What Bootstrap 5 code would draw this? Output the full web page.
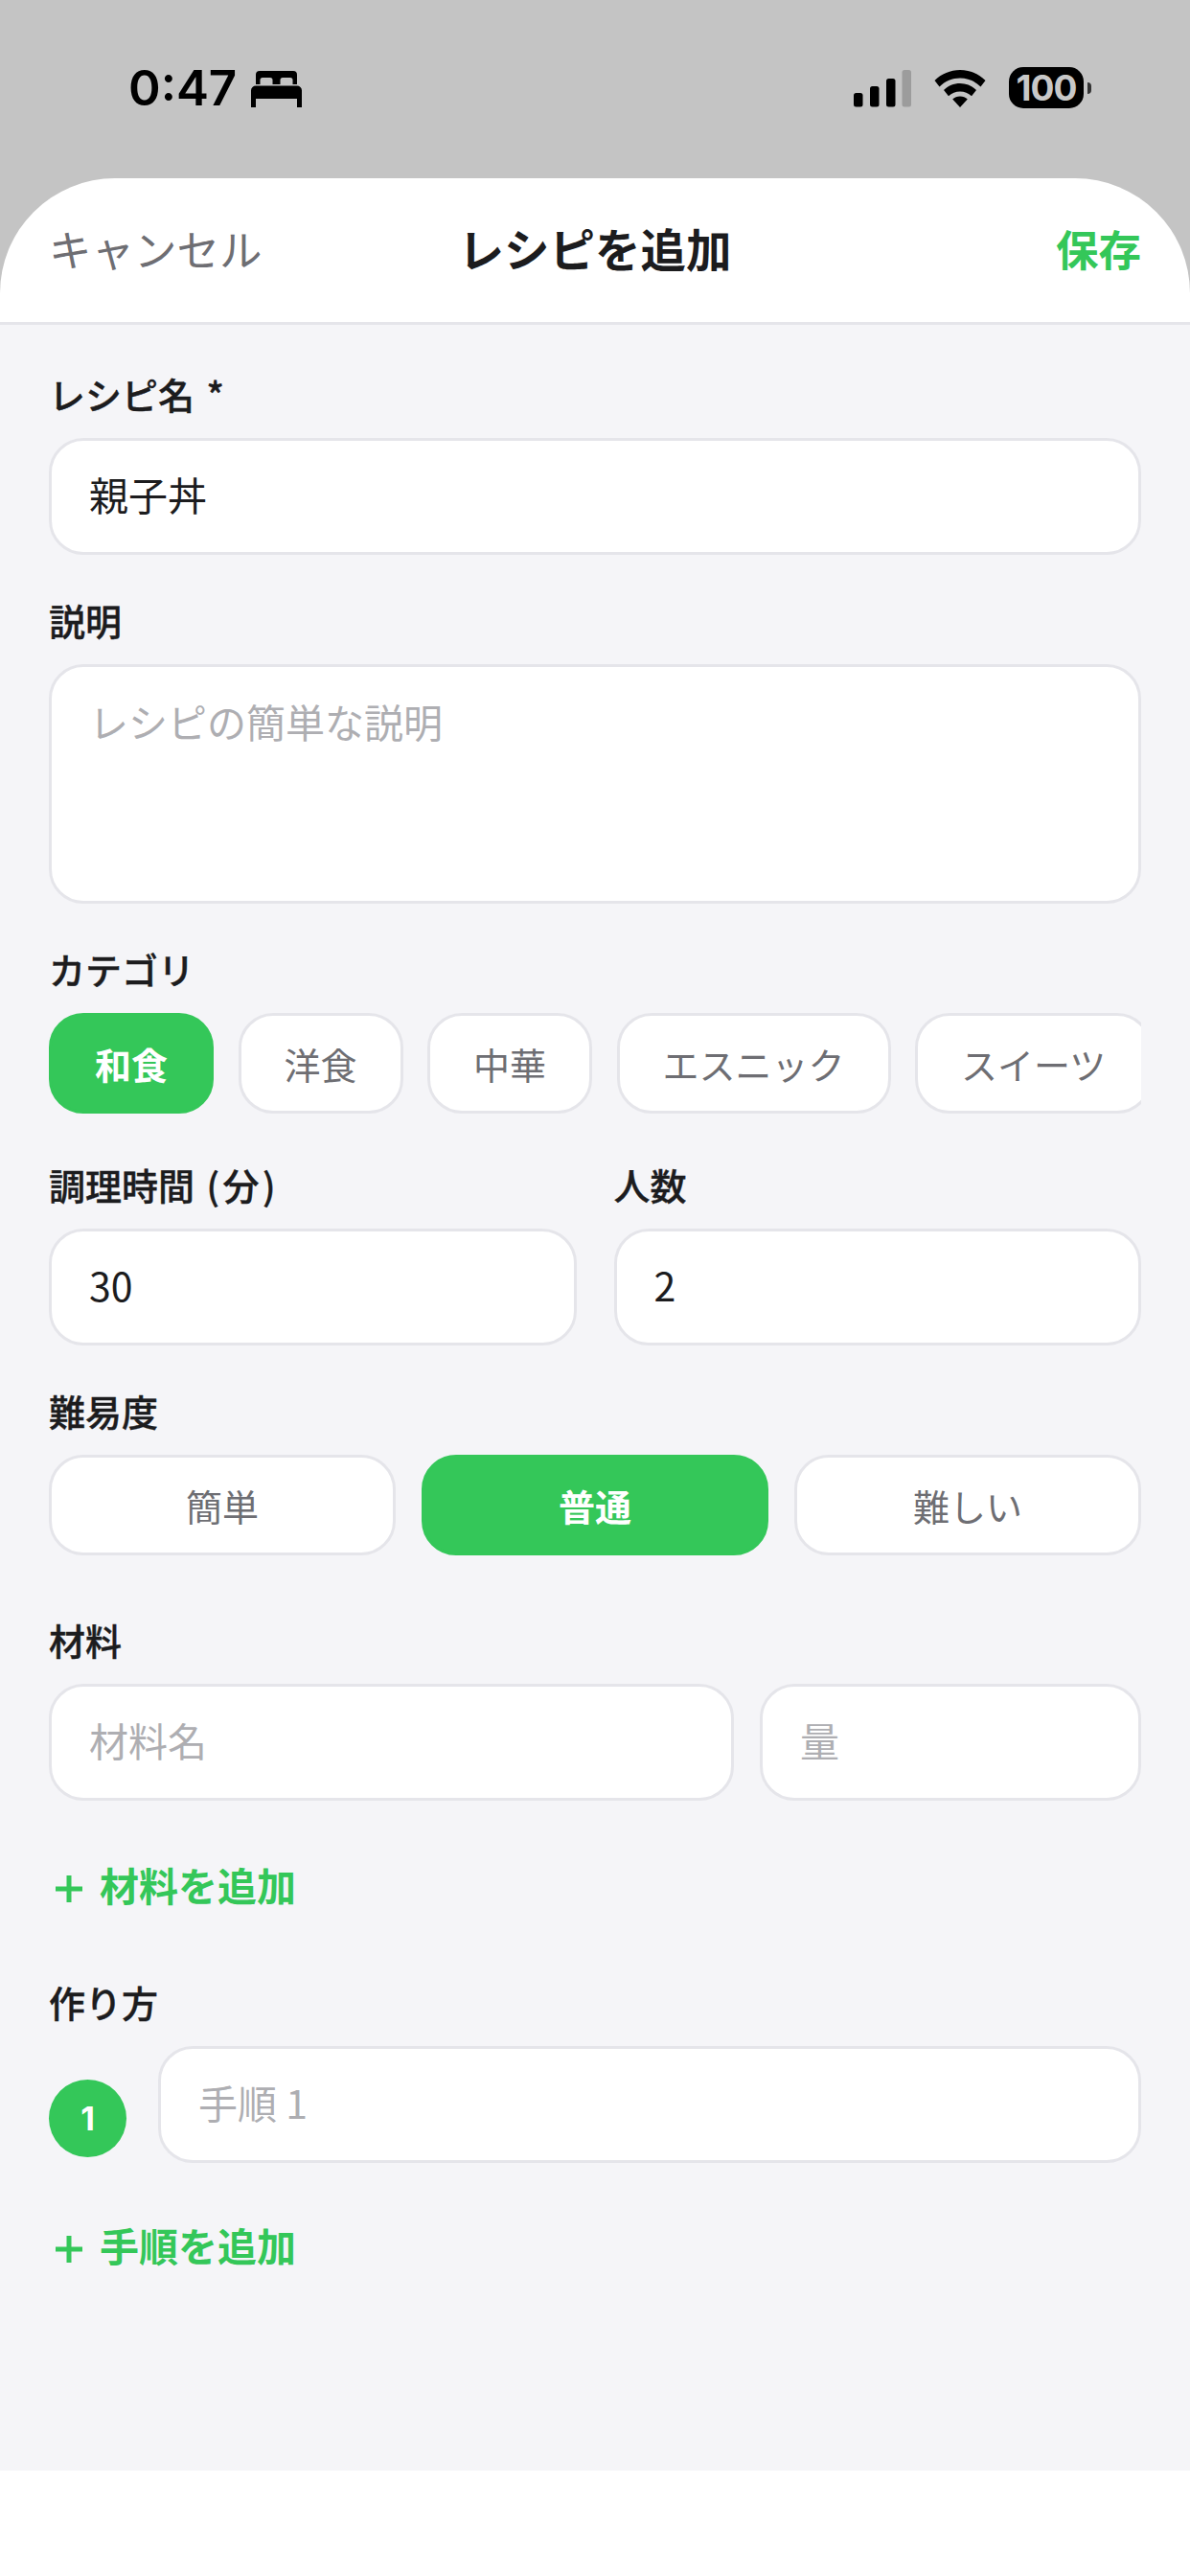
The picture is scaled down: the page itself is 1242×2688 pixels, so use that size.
<!DOCTYPE html>
<html lang="ja">
<head>
  <meta charset="UTF-8" />
  <meta name="viewport" content="width=device-width, initial-scale=1">
  <title>レシピを追加</title>
  <link href="https://cdn.jsdelivr.net/npm/bootstrap@5.3.3/dist/css/bootstrap.min.css" rel="stylesheet">
  <style>
    :root {
      --green: #34c759;
      --line: #e5e5ea;
      --ink: #1c1c1e;
      --soft: #6e6e73;
      --ph: #aeaeb2;
      --cjk: "Noto Sans CJK JP", "Inter", sans-serif;
    }
    body { background: #fff; font-family: var(--cjk); color: var(--ink); width: 1242px; }
    .top-area { background: #c4c4c4; }
    .status-row { height: 186px; padding: 70px 103px 0 134px; }
    .clock { font: 600 51px/43px "Inter", sans-serif; color: #000; }
    .bed-ico { width: 53px; height: 38px; margin: 4px 0 0 15px; }
    .sig-ico { width: 60px; height: 40px; margin-top: 2px; }
    .wifi-ico { width: 54px; height: 40px; margin: 2px 0 0 24px; }
    .batt { width: 78px; height: 43px; border-radius: 15px; background: #000; color: #c8c8c8; font: 700 37px/43px "Inter", sans-serif; letter-spacing: -1px; margin-left: 24px; text-align: center; }
    .batt-nub { width: 4px; height: 12px; margin-left: 4px; background: #333; border-radius: 0 6px 6px 0; }
    .sheet-head { height: 153px; background: #fff; border-bottom: 3px solid var(--line); border-radius: 120px 120px 0 0; padding: 0 51px 4px; }
    .head-side { flex: 1 1 0; font-size: 44.5px; line-height: 1; }
    .head-cancel { color: var(--soft); }
    .head-title { font-size: 47.5px; font-weight: 700; line-height: 1; }
    .head-save { font-weight: 700; color: var(--green); text-align: right; }
    .form-body { background: #f5f5f8; height: 2239px; padding: 52px 51px 0; }
    .fld-label { display: block; font-size: 38px; font-weight: 500; line-height: 46px; margin: -3px 0 23px; word-spacing: 4px; -webkit-text-stroke: .4px var(--ink); }
    .unit-txt { letter-spacing: 3.5px; }
    .fld-box.form-control { height: 122px; border: 3px solid var(--line); border-radius: 36px; background: #fff; font-size: 41px; color: var(--ink); padding: 0 39px 7px; box-shadow: none; }
    .fld-box.form-control::placeholder { color: var(--ph); opacity: 1; }
    textarea.fld-box.form-control { height: 250px; padding: 26px 39px; resize: none; }
    .sec-gap { margin-bottom: 48px; }
    .chip-row { margin-bottom: 54px; overflow: hidden; gap: 25.5px; }
    .pick-btn.btn { height: 105px; border: 3px solid var(--line); border-radius: 36px; background: #fff; color: var(--soft); font-size: 38px; line-height: 1; padding: 0 45px; flex-shrink: 0; white-space: nowrap; }
    .pick-btn.btn.on { background: var(--green); border-color: var(--green); color: #fff; font-weight: 700; }
    .diff-row { margin-bottom: 68px; gap: 27px; }
    .diff-row .pick-btn.btn { flex: 1 1 0; padding: 0; }
    .amt-box { width: 398px; flex: none; }
    .gap-form { gap: 27px; }
    .gap-cols { gap: 39px; }
    .add-link.btn { display: flex; align-items: center; gap: 17px; height: 46px; padding: 0 0 0 6px; border: 0; font-size: 41px; font-weight: 700; line-height: 46px; color: var(--green); }
    .add-txt { margin-bottom: 10px; }
    .add-ico { width: 30px; height: 30px; }
    .add-one { margin: 69px 0 75px; }
    .add-two { margin-top: 67px; }
    .step-num { width: 81px; height: 81px; background: var(--green); color: #fff; font: 700 34px/81px "Inter", sans-serif; text-align: center; margin-bottom: 6px; flex: none; }
    .step-gap { gap: 33px; }
  </style>
</head>
<body>
  <div class="top-area">
    <div class="status-row d-flex align-items-start">
      <span class="clock">0:47</span>
      <svg class="bed-ico" viewBox="0 0 53 38" fill="#000">
        <path d="M9 0h35a4 4 0 0 1 4 4v10H43.500V9.500a2.500 2.500 0 0 0-2.500-2.500h-8a2.500 2.500 0 0 0-2.500 2.500V14h-8V9.500A2.500 2.500 0 0 0 20 7h-8a2.500 2.500 0 0 0-2.500 2.500V14H5V4a4 4 0 0 1 4-4z"/>
        <path d="M5 15.500h43a5 5 0 0 1 5 5V38h-5v-9H5v9H0V20.500a5 5 0 0 1 5-5z"/>
      </svg>
      <div class="ms-auto d-flex align-items-start">
        <svg class="sig-ico" viewBox="0 0 60 40">
          <rect x="0" y="25" width="9.500" height="14.500" rx="2.500" fill="#000"/>
          <rect x="17" y="18" width="9.500" height="21.500" rx="2.500" fill="#000"/>
          <rect x="34" y="10" width="9.500" height="29.500" rx="2.500" fill="#000"/>
          <rect x="50.500" y="1" width="9.500" height="38.500" rx="2.500" fill="#9c9c9c"/>
        </svg>
        <svg class="wifi-ico" viewBox="0 0 54 40" fill="#000">
          <path d="M27 1c10 0 19.500 4 26.500 11l-5 6.500C42.500 12.500 35 9.500 27 9.500S11.500 12.500 5.500 18.500l-5-6.500C7.500 5 17 1 27 1z"/>
          <path d="M27 15c6.500 0 12.500 2.500 17 7l-5 6.200c-3.200-3-7.500-4.700-12-4.700s-8.800 1.700-12 4.700L10 22c4.500-4.500 10.500-7 17-7z"/>
          <path d="M27 28.500c3 0 5.700 1.100 7.800 3L27 40l-7.800-8.500c2.100-1.900 4.800-3 7.800-3z"/>
        </svg>
        <div class="batt">100</div>
        <div class="batt-nub align-self-center"></div>
      </div>
    </div>
    <div class="sheet-head d-flex align-items-center">
      <span class="head-side head-cancel">キャンセル</span>
      <span class="head-title">レシピを追加</span>
      <span class="head-side head-save">保存</span>
    </div>
  </div>

  <form class="form-body">
    <div class="sec-gap">
      <label class="fld-label">レシピ名 *</label>
      <input class="form-control fld-box" type="text" value="親子丼">
    </div>
    <div class="sec-gap">
      <label class="fld-label">説明</label>
      <textarea class="form-control fld-box" placeholder="レシピの簡単な説明"></textarea>
    </div>
    <label class="fld-label">カテゴリ</label>
    <div class="chip-row d-flex">
      <button type="button" class="btn pick-btn on">和食</button>
      <button type="button" class="btn pick-btn">洋食</button>
      <button type="button" class="btn pick-btn">中華</button>
      <button type="button" class="btn pick-btn">エスニック</button>
      <button type="button" class="btn pick-btn">スイーツ</button>
    </div>
    <div class="d-flex gap-cols sec-gap">
      <div class="flex-fill w-50">
        <label class="fld-label">調理時間 <span class="unit-txt">(分)</span></label>
        <input class="form-control fld-box" type="text" value="30">
      </div>
      <div class="flex-fill w-50">
        <label class="fld-label">人数</label>
        <input class="form-control fld-box" type="text" value="2">
      </div>
    </div>
    <label class="fld-label">難易度</label>
    <div class="diff-row d-flex">
      <button type="button" class="btn pick-btn">簡単</button>
      <button type="button" class="btn pick-btn on">普通</button>
      <button type="button" class="btn pick-btn">難しい</button>
    </div>
    <label class="fld-label">材料</label>
    <div class="d-flex gap-form">
      <input class="form-control fld-box" type="text" placeholder="材料名">
      <input class="form-control fld-box amt-box" type="text" placeholder="量">
    </div>
    <button type="button" class="btn add-link add-one">
      <svg class="add-ico" viewBox="0 0 30 30"><path d="M15 1v28M1 15h28" stroke="#34c759" stroke-width="5" fill="none"/></svg>
      <span class="add-txt">材料を追加</span>
    </button>
    <label class="fld-label">作り方</label>
    <div class="d-flex align-items-end step-gap">
      <div class="step-num rounded-circle">1</div>
      <input class="form-control fld-box" type="text" placeholder="手順 1">
    </div>
    <button type="button" class="btn add-link add-two">
      <svg class="add-ico" viewBox="0 0 30 30"><path d="M15 1v28M1 15h28" stroke="#34c759" stroke-width="5" fill="none"/></svg>
      <span class="add-txt">手順を追加</span>
    </button>
  </form>

  <script src="https://cdn.jsdelivr.net/npm/bootstrap@5.3.3/dist/js/bootstrap.bundle.min.js"></script>
</body>
</html>
